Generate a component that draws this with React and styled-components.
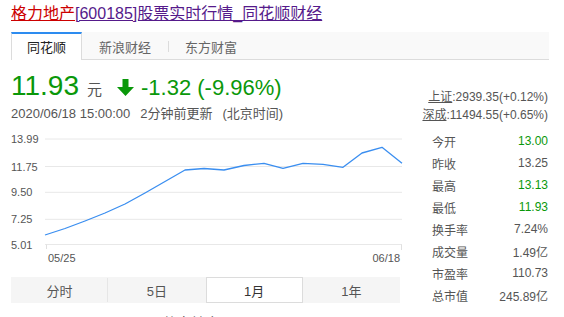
import React from 'react';
import styled, { createGlobalStyle } from 'styled-components';

const GlobalStyle = createGlobalStyle`
  html, body {
    margin: 0;
    padding: 0;
    background: #fff;
    overflow: hidden;
  }
  body {
    font-family: "Liberation Sans", Arial, "Noto Sans CJK SC", sans-serif;
    color: #555;
  }
`;

const GREEN = '#0a980a';

const Page = styled.div`
  width: 538px;
  padding-left: 11px;
  height: 317px;
  overflow: hidden;
`;

const Title = styled.h1`
  margin: 0;
  padding-top: 2px;
  font-size: 16px;
  font-weight: normal;
  line-height: 24px;
  white-space: nowrap;
`;

const TitleLink = styled.a`
  color: ${(p) => (p.$red ? '#cc0000' : '#551a8b')};
  text-decoration: underline;
`;

const TabBar = styled.div`
  margin-top: 6px;
  display: flex;
  align-items: stretch;
  height: 27px;
  background: #f9f9f9;
  border-bottom: 1px solid #dcdcdc;
`;

const Tab = styled.div`
  position: relative;
  display: flex;
  align-items: center;
  padding: 0 ${(p) => (p.$active ? '15px' : '17px')};
  font-size: 13px;
  color: ${(p) => (p.$active ? '#222' : '#666')};
  background: ${(p) => (p.$active ? '#fff' : 'transparent')};
  border-top: 2px solid ${(p) => (p.$active ? '#2d8cf0' : 'transparent')};
  border-left: ${(p) => (p.$active ? '1px solid #dcdcdc' : '0')};
  border-right: ${(p) => (p.$active ? '1px solid #dcdcdc' : '0')};
  margin-bottom: ${(p) => (p.$active ? '-1px' : '0')};
  padding-bottom: ${(p) => (p.$active ? '1px' : '0')};
  box-sizing: border-box;
  ${(p) =>
    p.$divider &&
    `
    &::before {
      content: '';
      position: absolute;
      left: 0;
      top: 7px;
      bottom: 7px;
      width: 1px;
      background: #dcdcdc;
    }
  `}
`;

const Body = styled.div`
  display: flex;
`;

const Left = styled.div`
  width: 393px;
  flex-shrink: 0;
`;

const Right = styled.div`
  width: 144px;
  padding-top: 28px;
  display: flex;
  flex-direction: column;
  align-items: flex-end;
`;

const PriceRow = styled.div`
  margin-top: 10px;
  height: 32px;
  display: flex;
  align-items: baseline;
  white-space: nowrap;
`;

const Price = styled.span`
  font-size: 28px;
  line-height: 32px;
  color: ${GREEN};
`;

const Unit = styled.span`
  margin-left: 8px;
  font-size: 15px;
  color: #555;
`;

const Arrow = styled.svg`
  margin-left: 15px;
  align-self: center;
  margin-top: 3px;
`;

const Change = styled.span`
  margin-left: 7px;
  font-size: 22px;
  color: ${GREEN};
`;

const DateLine = styled.div`
  margin-top: 3px;
  font-size: 13px;
  line-height: 18px;
  color: #555;
  white-space: nowrap;
`;

const Gap = styled.span`
  display: inline-block;
  width: ${(p) => p.$w}px;
`;

const Chart = styled.svg`
  display: block;
  margin-top: 3px;
`;

const Periods = styled.div`
  margin-top: 5px;
  width: 389px;
  height: 26px;
  display: grid;
  grid-template-columns: repeat(4, 1fr);
  background: #f5f5f5;
`;

const Period = styled.div`
  position: relative;
  display: flex;
  align-items: center;
  justify-content: center;
  font-size: 13px;
  color: ${(p) => (p.$active ? '#333' : '#555')};
  background: ${(p) => (p.$active ? '#fff' : 'transparent')};
  border: 1px solid ${(p) => (p.$active ? '#dcdcdc' : 'transparent')};
  box-sizing: border-box;
  ${(p) =>
    p.$divider &&
    `
    &::after {
      content: '';
      position: absolute;
      right: -1px;
      top: 0;
      bottom: 0;
      width: 1px;
      background: #e6e6e6;
    }
  `}
`;

const Footer = styled.div`
  margin-top: 9px;
  width: 389px;
  text-align: center;
  font-size: 14px;
  color: #555;
`;

const IndexLine = styled.div`
  font-size: 12px;
  line-height: 18px;
  color: #555;
  white-space: nowrap;
`;

const IndexName = styled.a`
  color: #555;
  text-decoration: underline;
`;

const Stats = styled.div`
  margin-top: 6px;
  display: flex;
  flex-direction: column;
`;

const StatRow = styled.div`
  width: 116px;
  height: 22px;
  display: flex;
  align-items: center;
  justify-content: space-between;
  font-size: 12px;
  color: #555;
`;

const StatValue = styled.span`
  color: ${(p) => (p.$green ? GREEN : '#555')};
`;

const points = [
  [45, 235], [65, 228.5], [85, 221], [105, 213], [125, 204], [145, 193],
  [165, 181.5], [185, 170], [204, 168.5], [224, 170], [244, 165.5],
  [264, 163.3], [283, 168.3], [303, 163.3], [323, 164.3], [343, 167.3],
  [362, 153], [382, 147.3], [402, 163.3],
];

const yTicks = [
  ['13.99', 139], ['11.75', 166.5], ['9.50', 192.3], ['7.25', 219.3], ['5.01', 244.5],
];

const stats = [
  ['今开', '13.00', true],
  ['昨收', '13.25', false],
  ['最高', '13.13', true],
  ['最低', '11.93', true],
  ['换手率', '7.24%', false],
  ['成交量', '1.49亿', false],
  ['市盈率', '110.73', false],
  ['总市值', '245.89亿', false],
];

function PriceChart() {
  const ox = 11;
  const oy = 126;
  const line = points.map(([x, y]) => `${x - ox},${y - oy}`).join(' ');
  return (
    <Chart width="393" height="146" viewBox="0 0 393 146">
      {yTicks.map(([label, y]) => (
        <g key={label}>
          <line x1={34} x2={391} y1={y - oy} y2={y - oy} stroke="#e8e8e8" strokeWidth="1" />
          <text x={0} y={y - oy + 4} fontSize="11" fill="#555" fontFamily="Liberation Sans, Arial, sans-serif">
            {label}
          </text>
        </g>
      ))}
      <line x1={35.5} x2={35.5} y1={118.5} y2={123} stroke="#e0e0e0" />
      <line x1={390.5} x2={390.5} y1={118.5} y2={124} stroke="#e0e0e0" />
      <text x={37} y={135.5} fontSize="11" fill="#555" fontFamily="Liberation Sans, Arial, sans-serif">05/25</text>
      <text x={389} y={135.5} fontSize="11" fill="#555" textAnchor="end" fontFamily="Liberation Sans, Arial, sans-serif">06/18</text>
      <polyline points={line} fill="none" stroke="#3a8ef0" strokeWidth="1.3" strokeLinejoin="round" />
    </Chart>
  );
}

export default function App() {
  return (
    <Page>
      <GlobalStyle />
      <Title>
        <TitleLink $red href="#">格力地产</TitleLink>
        <TitleLink href="#">[600185]股票实时行情_同花顺财经</TitleLink>
      </Title>
      <TabBar>
        <Tab $active>同花顺</Tab>
        <Tab>新浪财经</Tab>
        <Tab $divider>东方财富</Tab>
      </TabBar>
      <Body>
        <Left>
          <PriceRow>
            <Price>11.93</Price>
            <Unit>元</Unit>
            <Arrow width="17" height="17" viewBox="0 0 17 17">
              <polygon points="5.5,0 11.5,0 11.5,8 17,8 8.5,17 0,8 5.5,8" fill={GREEN} />
            </Arrow>
            <Change>-1.32 (-9.96%)</Change>
          </PriceRow>
          <DateLine>
            2020/06/18 15:00:00<Gap $w={10} />2分钟前更新<Gap $w={10} />(北京时间)
          </DateLine>
          <PriceChart />
          <Periods>
            <Period $divider>分时</Period>
            <Period>5日</Period>
            <Period $active>1月</Period>
            <Period>1年</Period>
          </Periods>
          <Footer>格力地产股吧</Footer>
        </Left>
        <Right>
          <IndexLine>
            <IndexName href="#">上证</IndexName>:2939.35(+0.12%)
          </IndexLine>
          <IndexLine>
            <IndexName href="#">深成</IndexName>:11494.55(+0.65%)
          </IndexLine>
          <Stats>
            {stats.map(([label, value, green]) => (
              <StatRow key={label}>
                <span>{label}</span>
                <StatValue $green={green}>{value}</StatValue>
              </StatRow>
            ))}
          </Stats>
        </Right>
      </Body>
    </Page>
  );
}
